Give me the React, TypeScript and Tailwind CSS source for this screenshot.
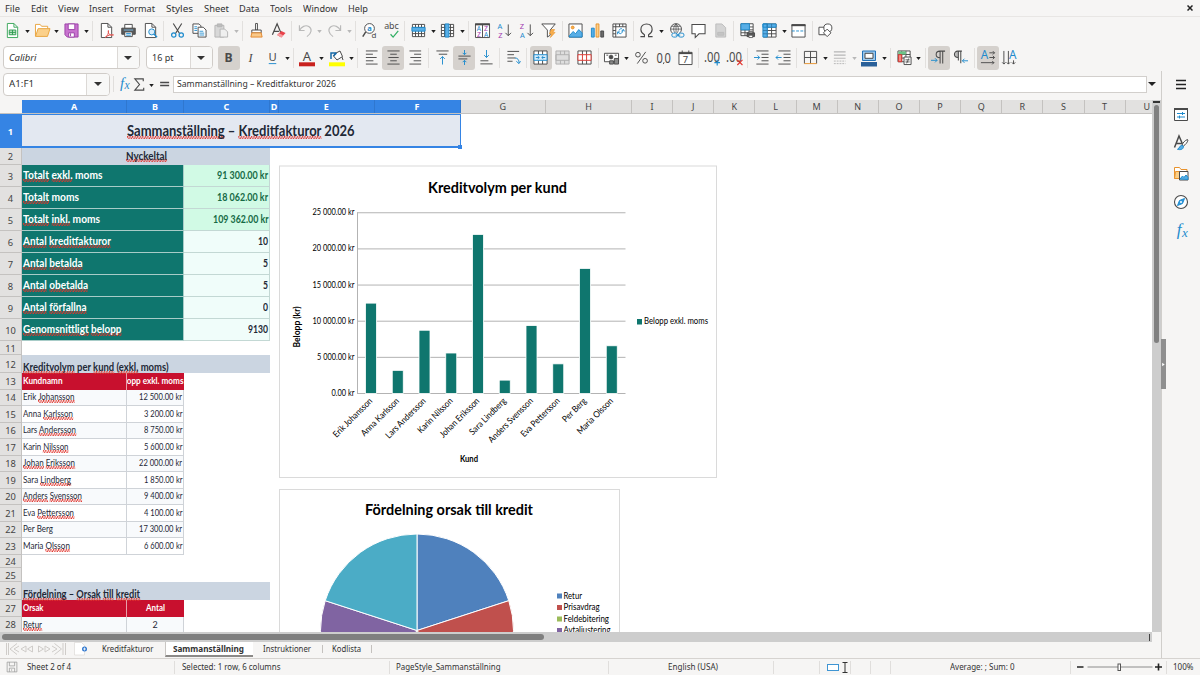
import { useLayoutEffect, useRef, type ReactNode } from "react";

const INK = "#4a4a4a";
const BLUE = "#1e8bcd";

/* ---------- text helpers ---------- */

function marked(text: string): ReactNode[] {
  return text.split("~").map((part, i) =>
    i % 2 ? (
      <span
        key={i}
        className="bg-[radial-gradient(circle_at_25%_30%,#e0342c_0.500px,transparent_1.100px),radial-gradient(circle_at_75%_75%,#e0342c_0.500px,transparent_1.100px)] bg-[length:3px_3px] bg-left-bottom bg-repeat-x pb-[0.800px]"
      >
        {part}
      </span>
    ) : (
      part
    ),
  );
}

/* One line of text, condensed or widened to take w pixels. */
function T({ w, t, className = "" }: { w: number; t: string; className?: string }) {
  const outer = useRef<HTMLSpanElement>(null);
  const inner = useRef<HTMLSpanElement>(null);
  useLayoutEffect(() => {
    const o = outer.current;
    const el = inner.current;
    if (!o || !el) return;
    el.style.transform = "none";
    const natural = el.getBoundingClientRect().width;
    o.style.width = `${w}px`;
    el.style.transform = `scaleX(${w / natural})`;
  }, [w, t]);
  return (
    <span ref={outer} className={`inline-block shrink-0 whitespace-nowrap ${className}`}>
      <span ref={inner} className="inline-block origin-left whitespace-nowrap">
        {marked(t)}
      </span>
    </span>
  );
}

/* ---------- icons ---------- */

function Svg({ children, className = "size-4" }: { children: ReactNode; className?: string }) {
  return (
    <svg viewBox="0 0 16 16" fill="none" stroke={INK} strokeWidth="1" className={`shrink-0 overflow-visible ${className}`}>
      {children}
    </svg>
  );
}

function Glyph({ x, y, s, c = INK, b, f = "Noto Sans", i, w, children }: { x: number; y: number; s: number; c?: string; b?: boolean; f?: string; i?: boolean; w?: number; children: string }) {
  return (
    <text x={x} y={y} fontSize={s} fill={c} stroke="none" textAnchor="middle" textLength={w} lengthAdjust="spacingAndGlyphs" fontFamily={`"${f}", sans-serif`} fontWeight={b ? 700 : 400} fontStyle={i ? "italic" : "normal"}>
      {children}
    </text>
  );
}

const gridLines = "M1.5 1.5h13v13h-13zM1.5 4.700h13M1.5 8h13M1.5 11.300h13M4.8 1.5v13M8 1.5v13M11.2 1.5v13";

const icons: Record<string, ReactNode> = {
  new: (
    <>
      <path d="M2.5 .5h7l4 4v11h-11z" fill="#fff" stroke="#3aa65a" />
      <path d="M9.5 .5v4h4" stroke="#3aa65a" />
      <path d="M4.5 7.5h7v5h-7zM4.5 10h7M8 7.5v5" fill="#bfe6c8" stroke="#2e9a50" />
    </>
  ),
  open: (
    <>
      <path d="M.5 14v-12.500h5l1.500 2h6.500v2.500" fill="#fff" stroke="#e8a33d" />
      <path d="M.5 14.300l2.800-8.300h12.700l-2.700 8.300z" fill="#fbd08a" stroke="#e8a33d" />
    </>
  ),
  save: (
    <>
      <path d="M1 1h14v14H3.500L1 12.500z" fill="#c873cf" stroke="#9b3fa6" />
      <path d="M4.5 1h7v6h-7z" fill="#fff" stroke="#9b3fa6" />
      <path d="M5 10.5h6V15H5z" fill="#fff" stroke="#9b3fa6" />
      <path d="M7 11v3" stroke="#9b3fa6" />
    </>
  ),
  pdf: (
    <>
      <path d="M2.5 .5h7l4 4v11h-11z" fill="#fff" />
      <path d="M9.5 .5v4h4" />
      <path d="M6.500 15.500c3-2 4-5 3.500-7.500-.9 4.500 3 5.500 5.500 4.700-3-.5-6 .3-9 2.800z" stroke="#e2504c" fill="#fff" />
    </>
  ),
  print: (
    <>
      <path d="M4 5.500v-4h8v4" fill="#fff" />
      <path d="M.8 5.500h14.400v6.500H.8z" fill="#5a5a5a" />
      <path d="M4 9.500h8v5H4z" fill="#fff" />
      <path d="M5.500 11.300h5M5.500 13h5" stroke={BLUE} />
      <path d="M3 7.500h10" stroke="#7cb8e0" />
    </>
  ),
  preview: (
    <>
      <path d="M2.500 .5h7l4 4v11h-11z" fill="#fff" />
      <path d="M9.500 .5v4h4" />
      <circle cx="9.300" cy="9.500" r="3.200" fill="#dceefb" stroke={BLUE} />
      <path d="M11.600 11.800l3.400 3.400" stroke={BLUE} strokeWidth="1.500" />
    </>
  ),
  cut: (
    <>
      <path d="M3.500 .5l6.500 10.500M12.500 .5L6 11" strokeWidth="1.200" />
      <circle cx="4" cy="12.800" r="2.300" stroke={BLUE} strokeWidth="1.300" />
      <circle cx="12" cy="12.800" r="2.300" stroke={BLUE} strokeWidth="1.300" />
    </>
  ),
  copy: (
    <>
      <path d="M1 1h6.500l2 2v8H1z" fill="#fff" />
      <path d="M6.500 4.500h5.500l3 3v7.500H6.500z" fill="#fff" />
      <path d="M8 8.800h4M8 10.800h5M8 12.800h5M2.500 4h3M2.500 6h3M2.500 8h3" stroke={BLUE} strokeWidth=".9" />
    </>
  ),
  paste: (
    <>
      <path d="M1 2.500h9.500v12.500H1z" fill="#d8d8d8" stroke="#b3b3b3" />
      <path d="M3.500 1h5v3h-5z" fill="#bdbdbd" stroke="#b3b3b3" />
      <path d="M6.500 6.500h5l3 3V15h-8z" fill="#efefef" stroke="#b3b3b3" />
    </>
  ),
  brush: (
    <>
      <path d="M7 .5h2v7H7z" fill="#fff" />
      <path d="M3 7.500h10v3H3z" fill="#fff" />
      <path d="M3 10.500h10l1 4.500H2z" fill="#f9c98a" stroke="#e2862c" />
    </>
  ),
  clear: (
    <>
      <path d="M1.500 12.500L6.500 .8l4 9.700M3.500 9h5" strokeWidth="1.300" />
      <path d="M6.500 12.700l4.500-4.200 4.500 2.200-4.500 4.800z" fill="#e8424a" stroke="none" />
      <path d="M6.500 12.700l2-1.900 4.500 2.300-2 2.400z" fill="#f59a9e" stroke="none" />
    </>
  ),
  undo: <path d="M1.500 2.500v5.500H7M1.700 7.800C3.500 4 8 1.700 11.500 3.800c3.800 2.200 3.300 7-2 10.700" stroke="#b9b9b9" strokeWidth="1.200" />,
  redo: <path d="M14.500 2.500v5.500H9M14.300 7.800C12.500 4 8 1.700 4.500 3.800c-3.800 2.200-3.300 7 2 10.700" stroke="#b9b9b9" strokeWidth="1.200" />,
  find: (
    <>
      <circle cx="8" cy="5.800" r="5.200" fill="#fff" />
      <path d="M4 9.500L.8 14.500" strokeWidth="1.600" />
      <Glyph x={8} y={8.200} s={8} c={BLUE} b>a</Glyph>
      <Glyph x={12.800} y={15.500} s={8.500}>d</Glyph>
    </>
  ),
  spell: (
    <>
      <Glyph x={8} y={6.800} s={9.500}>abc</Glyph>
      <path d="M7 12l2.700 3 5.500-6.500" stroke="#2fae62" strokeWidth="1.300" />
    </>
  ),
  row: (
    <>
      <path d={gridLines} fill="#fff" />
      <path d="M1 4.700h14v4H1z" fill="#58aee6" stroke={BLUE} />
    </>
  ),
  col: (
    <>
      <path d={gridLines} fill="#fff" />
      <path d="M5.500 1h4v14h-4z" fill="#58aee6" stroke={BLUE} />
    </>
  ),
  sort: (
    <>
      <path d="M.5 1h15v14.500H.5zM8 1v14.500" fill="#fff" />
      <path d="M0 1.500h16" strokeWidth="2" />
      <Glyph x={4.200} y={8.800} s={7} w={4.500} c={BLUE}>A</Glyph>
      <Glyph x={4.200} y={14.800} s={7} w={4.200} c="#a23bb0">Z</Glyph>
      <Glyph x={11.800} y={8.800} s={7} w={4.200} c="#a23bb0">Z</Glyph>
      <Glyph x={11.800} y={14.800} s={7} w={4.500} c={BLUE}>A</Glyph>
    </>
  ),
  asc: (
    <>
      <Glyph x={3} y={6.500} s={8} c={BLUE}>A</Glyph>
      <Glyph x={3.500} y={15.500} s={8} c="#a23bb0">Z</Glyph>
      <path d="M12 1.500v12M9 10.500L12 13.500l3-3" />
    </>
  ),
  desc: (
    <>
      <Glyph x={3} y={6.500} s={8} c="#a23bb0">Z</Glyph>
      <Glyph x={3.500} y={15.500} s={8} c={BLUE}>A</Glyph>
      <path d="M12 1.500v12M9 10.500L12 13.500l3-3" />
    </>
  ),
  filter: (
    <>
      <path d="M.8 1h14.400L9.800 7.500v5.500l-3 2V7.500z" fill="#fff" />
      <path d="M11 7l-2 4.500h2.500L10 15.500l5-5.500h-2.500L14.500 7z" fill="#f9b04d" stroke="#e8922c" strokeWidth=".7" />
    </>
  ),
  image: (
    <>
      <path d="M1 1h14v14H1z" fill="#fff" />
      <path d="M1.500 13.500l4-4.500 2.500 2.500L11.500 7l3.500 3.500V15H1.500z" fill="#58aee6" stroke={BLUE} />
      <circle cx="5" cy="4.800" r="1.500" fill="#f9b04d" stroke="#e8922c" />
    </>
  ),
  chart: (
    <>
      <path d="M1.500 5.500h3V15h-3z" fill="#58aee6" stroke={BLUE} />
      <path d="M6.500 1h3v14h-3z" fill="#fbd08a" stroke="#e8922c" />
      <path d="M11.500 8.500h3V15h-3z" fill="#6a6a6a" />
    </>
  ),
  pivot: (
    <>
      <path d="M1 1h14v14H1zM1 4h14M4 1v14M8 1v3M11.500 1v3M1 8h3M1 11.500h3" fill="#fff" />
      <path d="M6.500 9.500C8 12.500 11 12 12 7M6 12V9.500h2.300M10 9l2-2.200 1.500 2.200M7.500 8c.5-1.500 1.500-2 3-2" stroke={BLUE} />
    </>
  ),
  omega: <path d="M1.500 14.500h4.300v-2C3.700 11.300 2 9.500 2 7c0-3.800 2.500-6 6-6s6 2.200 6 6c0 2.500-1.700 4.300-3.800 5.500v2h4.300" strokeWidth="1.200" />,
  link: (
    <>
      <circle cx="7.500" cy="6.500" r="5.800" fill="#fff" />
      <path d="M2 6.500h11M3 3.500h9M7.500 1v11M7.500 1c-3.300 3-3.300 8 0 11M7.500 1c3.300 3 3.300 8 0 11" strokeWidth=".8" />
      <path d="M3 10.500h13v4.500H3z" fill="#f6f5f4" stroke="none" />
      <rect x="3" y="10.800" width="6" height="4.200" rx="2" stroke={BLUE} />
      <rect x="10" y="10.800" width="6" height="4.200" rx="2" stroke={BLUE} />
      <path d="M7 12.900h5" stroke={BLUE} />
    </>
  ),
  comment: <path d="M1 1.500h14v10H8.500l-4 4v-4H1z" fill="#fff" strokeWidth="1.100" />,
  header: (
    <>
      <path d="M3 1h6.500L13.500 5v10H3z" fill="#d4d4d4" stroke="#bcbcbc" />
      <path d="M5 10h6.500v3H5z" fill="#c4c4c4" stroke="#bcbcbc" />
    </>
  ),
  printArea: (
    <>
      <path d="M1 .8h13v12.700H1zM1 4.200h13M1 7.300h13M1 10.400h13M5.300 .8v12.700M9.700 .8v12.700" fill="#fff" />
      <path d="M1 .8h9v6.500H1z" fill="#58aee6" stroke={BLUE} />
      <path d="M7.500 10.500h8v4h-8z" fill="#5a5a5a" />
      <path d="M9.500 9h4v1.500h-4zM9.500 13h4v2.500h-4z" fill="#fff" strokeWidth=".8" />
    </>
  ),
  freeze: (
    <>
      <path d="M1.500 1h13.500v14H1.500zM1.500 4.500H15M1.500 8H15M1.500 11.500H15M5.500 1v14M10.200 1v14" fill="#fff" />
      <path d="M1 1h14v3.500H1zM1 1h4.500v14H1z" fill="#58aee6" stroke={BLUE} />
      <path d="M5.500 1v3.500M10.200 1v3.500M1 8h4.500M1 11.500h4.500" stroke="#2b6d9c" strokeWidth=".8" />
    </>
  ),
  split: (
    <>
      <path d="M1 2h14v13H1z" fill="#fff" />
      <path d="M.5 2.300h15" strokeWidth="2.200" />
      <path d="M1 8.500h14" stroke={BLUE} strokeDasharray="3 1.500" />
    </>
  ),
  shapes: (
    <>
      <path d="M1 4.500h7v8H1z" fill="#fff" />
      <circle cx="10.500" cy="5.300" r="4.300" fill="#fff" />
      <path d="M9.800 6.500l4 4-4 4-4-4z" fill="#fff" />
    </>
  ),
  bold: <Glyph x={8} y={12.500} s={13} b>B</Glyph>,
  italic: <Glyph x={8} y={12.500} s={13} f="Liberation Serif" i>I</Glyph>,
  underline: (
    <>
      <Glyph x={8} y={11.500} s={12}>U</Glyph>
      <path d="M4 14.500h8" stroke={BLUE} />
    </>
  ),
  fontColor: (
    <>
      <Glyph x={8} y={10.500} s={13}>A</Glyph>
      <path d="M0 12.300h16v4H0z" fill="#c9211e" stroke="none" />
    </>
  ),
  fill: (
    <>
      <path d="M6 3.500l5-2.500 2.500 5.500-5.500 3.500-3.500-4z" fill="#fff" />
      <path d="M2 9V3h5M4.500 6l3-3" stroke="#1669a8" strokeWidth="1.500" />
      <path d="M13 7l1 3" stroke={INK} />
      <path d="M0 12.300h16v4H0z" fill="#ffff00" stroke="none" />
    </>
  ),
  left: <path d="M2 1h12.500M2 4.500h7.500M2 8h11.500M2 11.500h8M2 15h12.500" />,
  center: <path d="M1.500 1h13M4.500 4.500h7M2.500 8h11M4.500 11.500h7M1.500 15h13" />,
  right: <path d="M1.500 1H14M6.500 4.500H14M2.500 8H14M6 11.500h8M1.500 15H14" />,
  top: (
    <>
      <path d="M1.500 1h13M4 4.500h9" />
      <path d="M8 15.500V7M5.500 9.500L8 7l2.500 2.500" stroke={BLUE} />
    </>
  ),
  middle: (
    <>
      <path d="M1.500 6.500h13M1.500 9.500h9.500" />
      <path d="M8 0v5M6 3l2 2 2-2M8 16v-5M6 13l2-2 2 2" stroke={BLUE} />
    </>
  ),
  bottom: (
    <>
      <path d="M1.500 11.500h8.500M1.500 14.800h13" />
      <path d="M8 0v8M5.500 5.500L8 8l2.500-2.500" stroke={BLUE} />
    </>
  ),
  wrap: (
    <>
      <path d="M1.500 1.500h12.500M1.500 5h7M1.500 8.500h8.500M1.500 12h5.500" />
      <path d="M9.500 8.500c3 0 4.500 2 4.500 5.500M11 12l2.800 2.500L15.500 12" stroke={BLUE} />
    </>
  ),
  merge: (
    <>
      <path d="M1 1h14v14H1zM5.800 1v4M10.200 1v4M5.800 11v4M10.200 11v4" fill="#fff" />
      <path d="M1 5h14v6H1z" fill="#d8edfb" stroke={BLUE} />
      <path d="M3 8h3.500M13 8H9.500M5 6.500L6.700 8 5 9.500M11 6.500L9.300 8l1.700 1.500" stroke={BLUE} />
    </>
  ),
  mergeOff: <path d="M1 1h14v14H1zM5.800 1v4M10.200 1v4M5.800 11v4M10.200 11v4M1 5h14v6H1z" fill="#dedede" stroke="#b0b0b0" />,
  unmerge: (
    <>
      <path d="M1 1h14v14H1zM5.800 1v4M10.200 1v4M5.800 11v4M10.200 11v4" fill="#fff" />
      <path d="M1 5h14v6H1zM5.800 5v6M10.200 5v6" fill="#fff" stroke="#d9342e" />
    </>
  ),
  currency: (
    <>
      <path d="M.5 3.500h15v9H.5z" fill="#fff" />
      <circle cx="7.500" cy="7.500" r="2" fill={INK} />
      <path d="M2.500 5.500h2M11.500 5.500h2" />
      <path d="M6 11.500h4V15H6zM11 9h4.500v6H11z" fill="#8a8a8a" />
    </>
  ),
  percent: (
    <>
      <circle cx="4.200" cy="5" r="2.500" />
      <circle cx="11.800" cy="11.500" r="2.500" />
      <path d="M12.500 2L3.500 14.500" />
    </>
  ),
  number: (
    <>
      <Glyph x={4} y={13.800} s={15.500} w={6.800}>0</Glyph>
      <Glyph x={12.500} y={13.800} s={15.500} w={6.800}>0</Glyph>
      <path d="M8.600 13l-.8 2" />
    </>
  ),
  date: (
    <>
      <path d="M1 2.500h14V15.500H1z" fill="#fff" />
      <path d="M1 3.500h14" strokeWidth="1.800" />
      <path d="M4.500 .5v3M11.500 .5v3" />
      <Glyph x={8} y={14} s={10}>7</Glyph>
    </>
  ),
  addDec: (
    <>
      <Glyph x={7.500} y={13.300} s={15} w={17}>.00</Glyph>
      <path d="M13 10.500v6M10 13.500h6" stroke={BLUE} strokeWidth="1.200" />
    </>
  ),
  delDec: (
    <>
      <Glyph x={7.500} y={13.300} s={15} w={17}>.00</Glyph>
      <path d="M11 10.500l5.500 5.500M16.500 10.500l-5.500 5.500" stroke="#e2342e" strokeWidth="1.200" />
    </>
  ),
  indent: (
    <>
      <path d="M2.500 1h13M8 4.500h7.500M8 8h7.500M8 11.500h7.500M2.500 15h13" />
      <path d="M0 8h6M3.800 5.800L6 8 3.800 10.200" stroke={BLUE} />
    </>
  ),
  outdent: (
    <>
      <path d="M2.500 1h13M8 4.500h7.500M8 8h7.500M8 11.500h7.500M2.500 15h13" />
      <path d="M0 8h6M2.200 5.800L0 8l2.200 2.200" stroke={BLUE} />
    </>
  ),
  borders: (
    <>
      <path d="M1.500 1.500h13v13M1.500 1.500v13M8 1.500v13M1.500 8h13" fill="none" />
      <path d="M1.500 14.500h13" stroke="#e8922c" />
    </>
  ),
  lineStyle: (
    <>
      <path d="M2 2h12.500M2 5.500h12.500" stroke="#b5b5b5" strokeWidth="1.500" />
      <path d="M2 8.800h12.500" stroke="#b5b5b5" />
      <path d="M2 11.800h12.500M2 14.500h12.500" stroke="#b5b5b5" strokeDasharray="2 1" />
    </>
  ),
  lineColor: (
    <>
      <path d="M1.500 1h13v9.500h-13z" fill="#9cc9ee" stroke="#2272b8" />
      <path d="M4 3.300h8v5H4z" fill="#fff" />
      <path d="M0 12h16v4.500H0z" fill="#2a6099" stroke="none" />
    </>
  ),
  conditional: (
    <>
      <path d="M1 1h13v11.500H1zM1 4.800h13M1 8.600h13M5 1v11.500M9.500 1v11.500" fill="#fff" />
      <path d="M1.500 1.500h8v3.300h-8z" fill="#6dc487" stroke="none" />
      <path d="M1.500 5H5v7.500H1.500z" fill="#f28b86" stroke="#d9342e" />
      <path d="M7.500 7.500h7.500v8H7.500z" fill="#fff" />
      <path d="M9 10.500h4.500M9 12.700h4.500M12.500 9l-2.200 5.200" strokeWidth=".9" />
    </>
  ),
  ltr: (
    <>
      <path d="M15 1.200H9.500C7 1.200 5.500 2.700 5.500 4.800s1.500 3.500 4 3.500M9.700 1.200v13.300M12.500 1.200v13.300" strokeWidth="1.100" />
      <path d="M0 11h6.500M4.300 8.800L6.500 11l-2.200 2.200" stroke={BLUE} />
    </>
  ),
  rtl: (
    <>
      <path d="M5.500 1.500H5c-4.500 0-4.500 6.500 0 6.500h.5z" fill="#bbb" stroke="none" />
      <path d="M9.500 1.200H5c-2 0-3.500 1.400-3.500 3.400S3 8 5.500 8M5.700 1.200v10M8.300 1.200v13" strokeWidth="1.100" />
      <path d="M16 11.500h-6M12.200 9.300L10 11.500l2.200 2.200" stroke={BLUE} />
    </>
  ),
  horiz: (
    <>
      <Glyph x={4.800} y={10} s={12.500} c={BLUE}>A</Glyph>
      <path d="M10 3h5.500M13.700 1.200L15.500 3l-1.800 1.800M10 8h5.500M13.700 6.200L15.500 8l-1.800 1.800M1 13.500h14M13 11.700l1.800 1.800-1.800 1.800" />
    </>
  ),
  vert: (
    <>
      <Glyph x={11.500} y={10} s={12.500} c={BLUE}>A</Glyph>
      <path d="M2 1v14M.2 13.200L2 15l1.800-1.800M6.800 1v14M5 13.200L6.800 15l1.800-1.800M12.300 11v4M10.500 13.200l1.800 1.800 1.800-1.800" />
    </>
  ),
};

function Ic({ n, on }: { n: string; on?: boolean }) {
  return (
    <span className={`flex h-6 w-[22px] shrink-0 items-center justify-center ${on ? "rounded-[3px] bg-[#d5d1cd]" : ""}`}>
      <Svg className={n === "fontColor" || n === "fill" || n === "lineColor" ? "size-4" : "size-[15px]"}>{icons[n]}</Svg>
    </span>
  );
}

function Caret({ dim, className = "w-[7.500px]" }: { dim?: boolean; className?: string }) {
  return (
    <span className={`flex shrink-0 items-center justify-center ${className}`}>
      <svg viewBox="0 0 6 4" className="mt-0.5 h-[3px] w-[5px]">
        <path d="M0 0h6L3 4z" fill={dim ? "#b8b8b8" : "#1f1f1f"} />
      </svg>
    </span>
  );
}

/* Items: a name is an icon, "|" a divider, "v" a menu arrow, "d" a disabled one, "*" marks a pressed button. */
function Tools({ items }: { items: string }) {
  return (
    <>
      {items.split(" ").map((it, i) =>
        it === "|" ? (
          <span key={i} className="flex w-[5.120px] shrink-0 justify-center">
            <span className="h-5 w-px bg-[#e2e0de]" />
          </span>
        ) : it === "v" || it === "d" ? (
          <Caret key={i} dim={it === "d"} />
        ) : (
          <Ic key={i} n={it.replace("*", "")} on={it.endsWith("*")} />
        ),
      )}
    </>
  );
}

function Combo({ children, className, arrow }: { children: ReactNode; className: string; arrow: string }) {
  return (
    <div className={`flex h-[23px] shrink-0 items-stretch overflow-hidden rounded-[4px] border border-[#d0ccc8] bg-white ${className}`}>
      <div className="flex flex-1 items-center">{children}</div>
      <div className={`flex items-center justify-center border-l border-[#dcd9d6] bg-[#f8f8f7] ${arrow}`}>
        <svg viewBox="0 0 8 4" className="h-1 w-2">
          <path d="M0 0h8L4 4z" fill="#333" />
        </svg>
      </div>
    </div>
  );
}

/* ---------- sheet ---------- */

const columns: [string, string][] = [
  ["A", "w-[105px]"], ["B", "w-[57px]"], ["C", "w-[86px]"], ["D", "w-[9px]"], ["E", "w-[95.500px]"], ["F", "w-[86px]"],
  ["G", "w-[85.500px]"], ["H", "w-[86px]"],
  ..."IJKLMNOPQRST".split("").map((c): [string, string] => [c, "w-[41.150px]"]),
];

function Row({ n, h, children }: { n: number; h: string; children?: ReactNode }) {
  const on = n === 1;
  return (
    <div className={`flex shrink-0 ${h}`}>
      <div
        className={`flex w-[22px] shrink-0 items-center justify-center border-r border-b pt-0.5 text-[9.300px] ${
          on ? "border-[#3584e4] bg-[#3584e4] font-bold text-white" : "border-[#c4c2c0] bg-[#e2e1e0] text-[#444]"
        }`}
      >
        {n}
      </div>
      <div className="flex min-w-0 flex-1 font-[Lato,sans-serif] text-[#1f2937]">{children}</div>
    </div>
  );
}

const metrics: [number, string, number, string, number][] = [
  [3, "~Totalt~ ~exkl.~ moms", 79.500, "91 300.00 kr", 51],
  [4, "~Totalt~ moms", 56, "18 062.00 kr", 51],
  [5, "~Totalt~ ~inkl.~ moms", 77, "109 362.00 kr", 55.500],
  [6, "~Antal~ ~kreditfakturor~", 88, "10", 10],
  [7, "~Antal~ ~betalda~", 59.500, "5", 5],
  [8, "~Antal~ ~obetalda~", 65, "5", 5],
  [9, "~Antal~ ~förfallna~", 63.500, "0", 5],
  [10, "~Genomsnittligt~ ~belopp~", 98.500, "9130", 20],
];

const customers: [string, number, string, number, number][] = [
  ["Erik ~Johansson~", 51.500, "12 500.00 kr", 43, 12500],
  ["Anna ~Karlsson~", 50, "3 200.00 kr", 38.500, 3200],
  ["Lars ~Andersson~", 53, "8 750.00 kr", 38.500, 8750],
  ["Karin ~Nilsson~", 45.500, "5 600.00 kr", 38.500, 5600],
  ["~Johan~ ~Eriksson~", 52, "22 000.00 kr", 43, 22000],
  ["Sara ~Lindberg~", 48, "1 850.00 kr", 38.500, 1850],
  ["~Anders~ ~Svensson~", 59, "9 400.00 kr", 38.500, 9400],
  ["Eva ~Pettersson~", 51, "4 100.00 kr", 38.500, 4100],
  ["Per Berg", 30, "17 300.00 kr", 43, 17300],
  ["Maria ~Olsson~", 47, "6 600.00 kr", 38.500, 6600],
];

function SectionTitle({ t, w }: { t: string; w: number }) {
  return (
    <div className="flex w-[248px] items-end bg-[#cbd5e1] pl-[0.500px] text-[11px] leading-[13px] font-bold">
      <T w={w} t={t} />
    </div>
  );
}

function TableHead({ a, aw, b, bw, right }: { a: string; aw: number; b: string; bw: number; right?: boolean }) {
  return (
    <>
      <div className="flex w-[105px] items-center border-r border-[#e8a0aa] bg-[#c8102e] pb-px pl-[0.500px] text-[9.400px] leading-3 font-bold text-white">
        <T w={aw} t={a} />
      </div>
      <div className={`flex w-[57px] items-center overflow-hidden bg-[#c8102e] pb-px text-[9.400px] leading-3 font-bold text-white ${right ? "justify-end pr-[0.500px]" : "justify-center"}`}>
        <T w={bw} t={b} />
      </div>
    </>
  );
}

/* ---------- charts ---------- */

function ChartText({ x, y, w, s, t, anchor = "start", b, rot }: { x: number; y: number; w: number; s: number; t: string; anchor?: "start" | "middle" | "end"; b?: boolean; rot?: number }) {
  return (
    <text x={x} y={y} fontSize={s} textLength={w} lengthAdjust="spacingAndGlyphs" textAnchor={anchor} fontWeight={b ? 700 : 400} fill="#000" transform={rot ? `rotate(${rot} ${x} ${y})` : undefined}>
      {t}
    </text>
  );
}

function BarChart() {
  const base = 393.5;
  const ticks = [0, 5, 10, 15, 20, 25];
  return (
    <svg viewBox="279 165 439 313" className="absolute top-[65px] left-[279px] h-[313px] w-[439px] font-[Lato,sans-serif]">
      <rect x="279.500" y="166" width="437" height="311.500" fill="#fff" stroke="#dadada" />
      <ChartText x={497.500} y={193} w={139} s={15.500} t="Kreditvolym per kund" anchor="middle" b />
      {ticks.map((k) => (
        <g key={k}>
          <line x1="357" x2="625.500" y1={base - k * 7.230} y2={base - k * 7.230} stroke="#b3b3b3" />
          <ChartText x={354.500} y={base - k * 7.230 + 2.500} w={k === 0 ? 23 : k === 5 ? 37.500 : 42} s={8.900} anchor="end" t={k === 0 ? "0.00 kr" : `${k} 000.00 kr`} />
        </g>
      ))}
      <line x1="357.500" x2="357.500" y1="212.500" y2="394" stroke="#b3b3b3" />
      {customers.map(([name, w, , , v], i) => {
        const x = 371 + i * 26.75;
        const h = v * 0.00723;
        return (
          <g key={name}>
            <rect x={x - 5.500} y={base - h} width="11" height={h} fill="#0f766e" stroke="#fff" strokeWidth=".8" />
            <ChartText x={x + 2} y={401.500} w={w} s={8.900} anchor="end" t={name.replace(/~/g, "")} rot={-45} />
          </g>
        );
      })}
      <ChartText x={299.500} y={327} w={41} s={8.800} anchor="middle" t="Belopp (kr)" b rot={-90} />
      <ChartText x={469} y={461.500} w={18} s={8.900} anchor="middle" t="Kund" b />
      <rect x="637" y="319" width="5" height="5.500" fill="#0f766e" />
      <ChartText x={644} y={324} w={64} s={9} t="Belopp exkl. moms" />
    </svg>
  );
}

function PieChart() {
  const cx = 417;
  const cy = 630.5;
  const r = 96.5;
  const colors = ["#4f81bd", "#c0504d", "#9bbb59", "#8064a2", "#4bacc6"];
  const at = (deg: number) => `${cx + r * Math.sin((deg * Math.PI) / 180)} ${cy - r * Math.cos((deg * Math.PI) / 180)}`;
  const legend: [string, number][] = [["Retur", 18.500], ["Prisavdrag", 36], ["Feldebitering", 45.500], ["Avtaljustering", 47]];
  return (
    <svg viewBox="279 489 341 143" className="absolute top-[389px] left-[279px] h-[143px] w-[341px] font-[Lato,sans-serif]">
      <rect x="279.500" y="489.500" width="340" height="200" fill="#fff" stroke="#dadada" />
      <ChartText x={449} y={515} w={168} s={15.500} t="Fördelning orsak till kredit" anchor="middle" b />
      {colors.map((c, i) => (
        <path key={c} d={`M${cx} ${cy}L${at(i * 72)}A${r} ${r} 0 0 1 ${at(i * 72 + 72)}z`} fill={c} stroke="#fff" />
      ))}
      {legend.map(([t, w], i) => (
        <g key={t}>
          <rect x="557" y={593.500 + i * 11.500} width="5" height="5" fill={colors[i]} />
          <ChartText x={563.500} y={598.800 + i * 11.500} w={w} s={9} t={t} />
        </g>
      ))}
    </svg>
  );
}

/* ---------- page ---------- */

const menus: [string, number][] = [
  ["File", 15], ["Edit", 16.500], ["View", 21], ["Insert", 24.500], ["Format", 31], ["Styles", 27], ["Sheet", 25],
  ["Data", 20.500], ["Tools", 22], ["Window", 34.500], ["Help", 20],
];

function Status({ children, className }: { children?: ReactNode; className: string }) {
  return <div className={`flex h-[13px] shrink-0 items-center ${className}`}>{children}</div>;
}

export default function App() {
  return (
    <div className="flex h-[675px] w-[1200px] flex-col overflow-hidden bg-[#f6f5f4] font-['Noto_Sans',sans-serif] text-[#333]">
      <div className="flex h-[17px] shrink-0 items-center border-b border-[#e8e6e4] pr-[7px] pl-[5px] text-[9px] leading-none">
        <div className="flex gap-[10.600px]">
          {menus.map(([t, w]) => (
            <T key={t} t={t} w={w} />
          ))}
        </div>
        <svg viewBox="0 0 6 6" className="ml-auto size-[6px]">
          <path d="M.5 .5l5 5M5.500 .5l-5 5" stroke="#222" strokeWidth="1.500" />
        </svg>
      </div>

      <div className="flex h-[27px] shrink-0 items-center pl-[1.700px]">
        <Tools items="new v open v save v | pdf print preview | cut copy paste d | brush clear | undo d redo d | find spell | row v col v | sort asc desc filter | image chart pivot | omega v link comment header | printArea freeze v split | shapes" />
      </div>

      <div className="flex h-[27px] shrink-0 items-center pl-[3px]">
        <Combo className="w-[136.500px]" arrow="w-[22px]">
          <T w={27.500} t="Calibri" className="ml-[5px] text-[9.300px] italic" />
        </Combo>
        <Combo className="mr-[5px] ml-[6px] w-[67px]" arrow="w-[22px]">
          <T w={21.500} t="16 pt" className="ml-[5px] text-[9.300px]" />
        </Combo>
        <Tools items="bold* italic underline v | fontColor v fill v | left center* right | top middle* bottom | wrap | merge* mergeOff unmerge | currency v percent number date | addDec delDec | indent outdent | borders v lineStyle d lineColor v | conditional v | ltr* rtl | horiz* vert" />
      </div>

      <div className="flex h-[587px] shrink-0">
        <div className="flex w-[1161px] shrink-0 flex-col">
          <div className="flex h-[29px] shrink-0 items-center pb-[3px] pl-[3px]">
            <Combo className="w-[107px]" arrow="w-[23px]">
              <T w={25} t="A1:F1" className="ml-[5px] text-[9.300px]" />
            </Combo>
            <span className="ml-[3px] h-4 w-px bg-[#e0dedc]" />
            <Svg className="ml-[2px] size-4">
              <Glyph x={6} y={12} s={15} c={BLUE} f="Liberation Serif" i>f</Glyph>
              <Glyph x={11} y={13} s={11.500} c={BLUE} f="Liberation Serif" i>x</Glyph>
            </Svg>
            <Svg className="size-[15px]">
              <path d="M12 4.500V2H3l5 6-5 6h9.500v-2.500" strokeWidth="1.200" />
            </Svg>
            <Caret className="w-[9px]" />
            <Svg className="ml-[3px] size-3">
              <path d="M1.500 6h12M1.500 10h12" strokeWidth="1.800" />
            </Svg>
            <div className="ml-[1.500px] flex h-[17px] w-[974px] items-center border border-[#d2cfcc] bg-white pl-[3.500px] text-[9.300px]">
              <T w={159} t="Sammanställning – Kreditfakturor 2026" />
            </div>
            <svg viewBox="0 0 8 4" className="ml-px h-1 w-2">
              <path d="M0 0h8L4 4z" fill="#222" />
            </svg>
          </div>

          <div className="flex h-[532px] shrink-0">
            <div className="relative flex w-[1152px] shrink-0 flex-col overflow-hidden bg-white">
              <div className="flex h-[14px] shrink-0 border-b border-[#c4c2c0] bg-[#e2e1e0] text-[9px] leading-none text-[#444]">
                <div className="w-[22px] shrink-0 bg-[#f6f5f4]" />
                {columns.map(([c, w], i) => (
                  <div key={c} className={`flex shrink-0 items-center justify-center border-r ${w} ${i < 6 ? "border-[#2f77cf] bg-[#3584e4] font-bold text-white" : "border-[#c4c2c0]"}`}>
                    {c}
                  </div>
                ))}
                <div className="flex flex-1 items-center justify-end pr-0.5">U</div>
              </div>

              <Row n={1} h="h-[34px]">
                <div className="relative flex w-[438.500px] items-center justify-center border-t border-r border-b-2 border-[#3584e4] bg-[#e3e8f1] pb-0.5 text-[15.300px] leading-5 font-bold">
                  <T w={227.500} t="~Sammanställning~ – ~Kreditfakturor~ 2026" />
                  <span className="absolute -right-0.5 -bottom-[3px] size-1 bg-[#3584e4]" />
                </div>
              </Row>
              <Row n={2} h="h-[17px]">
                <div className="flex w-[248px] items-center justify-center bg-[#cbd5e1] pb-0.5 text-[11px] leading-[14px] font-bold">
                  <T w={41} t="~Nyckeltal~" />
                </div>
              </Row>
              {metrics.map(([n, label, w, value, vw], i) => (
                <Row key={n} n={n} h="h-[22px]">
                  <div className="flex w-[162px] items-center border-r border-b border-[#a8ccc8] bg-[#0f766e] pb-px pl-[0.500px] text-[11px] leading-[14px] font-bold text-white">
                    <T w={w} t={label} />
                  </div>
                  <div className={`flex w-[86px] items-center justify-end border-r border-b border-[#c3d8d4] pr-px pb-0.5 text-[11px] leading-[14px] font-bold ${i < 3 ? "bg-[#d1fae5] text-[#166a45]" : "bg-[#f0fdfa]"}`}>
                    <T w={vw} t={value} />
                  </div>
                </Row>
              ))}
              <Row n={11} h="h-[14px]" />
              <Row n={12} h="h-[18px]">
                <SectionTitle w={145.500} t="~Kreditvolym~ per ~kund~ (~exkl,~ moms)" />
              </Row>
              <Row n={13} h="h-[16.500px]">
                <TableHead a="Kundnamn" aw={39.500} b="Belopp exkl. moms" bw={68.500} right />
              </Row>
              {customers.map(([name, w, value, vw], i) => (
                <Row key={name} n={14 + i} h="h-[16.500px]">
                  <div className={`flex w-[105px] items-center border-r border-b border-[#cfd3d8] pl-[0.500px] text-[9.500px] leading-3 ${i % 2 ? "bg-white" : "bg-[#f8fafc]"}`}>
                    <T w={w} t={name} />
                  </div>
                  <div className={`flex w-[57px] items-center justify-end border-r border-b border-[#cfd3d8] pr-px text-[9px] leading-3 ${i % 2 ? "bg-white" : "bg-[#f8fafc]"}`}>
                    <T w={vw} t={value} />
                  </div>
                </Row>
              ))}
              <Row n={24} h="h-[13.500px]" />
              <Row n={25} h="h-[14px]" />
              <Row n={26} h="h-[18px]">
                <SectionTitle w={117} t="~Fördelning~ – ~Orsak~ ~till~ ~kredit~" />
              </Row>
              <Row n={27} h="h-[16.500px]">
                <TableHead a="Orsak" aw={20.500} b="Antal" bw={19} />
              </Row>
              <Row n={28} h="h-[16.500px]">
                <div className="flex w-[105px] items-center border-r border-[#cfd3d8] bg-[#f8fafc] pl-[0.500px] text-[9.500px] leading-3">
                  <T w={19} t="~Retur~" />
                </div>
                <div className="flex w-[57px] items-center justify-center border-r border-[#cfd3d8] bg-[#f8fafc] text-[9px] leading-3">2</div>
              </Row>

              <BarChart />
              <PieChart />
            </div>
            <div className="flex w-[9px] shrink-0 flex-col items-center bg-[#cdcdcd] pt-px">
              <span className="h-[1.500px] w-[7px] bg-[#333]" />
              <span className="mt-[2.500px] h-[238px] w-[5.500px] rounded-full bg-[#808080]" />
            </div>
          </div>

          <div className="flex h-[10px] w-[1152px] shrink-0 items-center justify-between bg-[#cdcdcd] px-0.5">
            <span className="h-[5.500px] w-[542px] rounded-full bg-[#7f7f7f]" />
            <span className="h-[7px] w-[1.500px] bg-[#444]" />
          </div>

          <div className="flex h-[16px] shrink-0 items-start text-[9.300px] leading-[14px]">
            <svg viewBox="0 0 62 14" fill="none" stroke="#cfccc9" className="ml-[5px] h-[14px] w-[62px]">
              <path d="M1.500 1v12M3.500 1v12M12 1.500L5 7l7 5.500M14 4L9 7l5 3M21 4l-5 3 5 3zM27.500 4l-5 3 5 3zM33.500 4l5 3-5 3zM40 4l5 3-5 3zM47 4l5 3-5 3M49.500 1.500l7 5.500-7 5.500M58 1v12M60.500 1v12" />
            </svg>
            <svg viewBox="0 0 14 14" className="ml-[7px] size-[14px]">
              <path d="M.5 .5h7l3 3v9.500H.5z" fill="#fff" stroke="#d8d5d2" strokeWidth=".6" />
              <circle cx="10.500" cy="7" r="2.500" fill="#2f77cf" />
              <path d="M10.500 5.500v3M9 7h3" stroke="#fff" strokeWidth=".8" />
            </svg>
            <T w={51.500} t="Kreditfakturor" className="ml-[14px]" />
            <div className="ml-[11.500px] flex h-[15px] w-[88px] justify-center border-b-2 border-l border-b-[#8b8987] border-l-[#c9c6c3] bg-white pr-[2.500px] font-bold">
              <T w={71} t="Sammanställning" />
            </div>
            <T w={48} t="Instruktioner" className="ml-[9.500px]" />
            <span className="mt-[3px] ml-[11px] h-2 w-px bg-[#c4c1be]" />
            <T w={29} t="Kodlista" className="ml-[9px]" />
            <span className="mt-[3px] ml-[10px] h-2 w-px bg-[#c4c1be]" />
          </div>
        </div>

        <div className="relative flex flex-1 flex-col items-center gap-[13.200px] border-l border-[#d0cecb] pt-[6px]">
          <Svg>
            <path d="M3 3.500h10M3 7.500h10M3 11.500h10" stroke="#222" strokeWidth="1.500" />
          </Svg>
          <Svg>
            <path d="M1.500 2.500h13v12h-13z" fill="#fff" />
            <path d="M1 3h14" strokeWidth="2" />
            <path d="M4 7.500h8M4 11h8M9.500 6v3M6.500 9.500v3" stroke={BLUE} />
          </Svg>
          <Svg>
            <path d="M1.500 12.500L6 1l3.500 8M3 8.500h5.500" strokeWidth="1.500" />
            <path d="M14.500 4.500c-2.500 1-4.500 3-5.500 5.500l1.500 1c2-1.500 4-3.500 4.500-6z" fill="#fff" />
            <path d="M8.800 10.300c-2 .2-2 2.700-4.300 4 3 .8 6 .2 6-3z" fill="#58aee6" stroke={BLUE} />
          </Svg>
          <Svg>
            <path d="M1.500 13.500v-11h5l1.500 2h6v3" fill="#fff" stroke="#e8922c" />
            <path d="M1.500 13.500l1-7h5v7z" fill="#fbd08a" stroke="#e8922c" />
            <path d="M6.500 6.500h8.500v8.500H6.500z" fill="#fff" />
            <path d="M7 14l2.500-3 1.500 1.500 2-2.500 2 2.500v2z" fill="#58aee6" stroke={BLUE} />
          </Svg>
          <Svg>
            <circle cx="8" cy="8" r="6.500" fill="#fff" strokeWidth="1.100" />
            <path d="M11.500 4.500L9.500 9.500l-5 2 2-5z" fill="#2f97dd" stroke={BLUE} />
            <circle cx="8" cy="8" r="1" fill="#fff" stroke="none" />
          </Svg>
          <Svg>
            <Glyph x={6} y={12} s={17} c={BLUE} f="Liberation Serif" i>f</Glyph>
            <Glyph x={11.800} y={13.500} s={13} c={BLUE} f="Liberation Serif" i>x</Glyph>
          </Svg>
          <div className="absolute top-[268px] -left-px flex h-[50px] w-[5px] items-center bg-[#8f8f8f]">
            <svg viewBox="0 0 4 6" className="h-[5px] w-1">
              <path d="M1 1l3 2-3 2z" fill="#fff" />
            </svg>
          </div>
        </div>
      </div>

      <div className="flex h-[17px] shrink-0 items-center divide-x divide-[#e0dedc] border-t border-[#d6d3d0] text-[9.300px] leading-none">
        <Status className="w-[175px]">
          <Svg className="mr-[9px] ml-[6px] size-3">
            <path d="M1.500 1.500h13v13h-13zM4.500 1.500v5h7v-5M4.500 14.500v-5h7v5M7.500 11v2" stroke="#999" />
          </Svg>
          <T w={44} t="Sheet 2 of 4" />
        </Status>
        <Status className="w-[215px] pl-[6.500px]">
          <T w={98.500} t="Selected: 1 row, 6 columns" />
        </Status>
        <Status className="w-[219px] pl-[5.500px]">
          <T w={104.500} t="PageStyle_Sammanställning" />
        </Status>
        <Status className="w-[165px] justify-center pl-1">
          <T w={50} t="English (USA)" />
        </Status>
        <Status className="w-[46px]" />
        <Status className="w-[31px] justify-center gap-[3px] pl-1">
          <span className="h-[7px] w-[12px] border border-[#3f95d3] bg-white" />
          <svg viewBox="0 0 6 11" className="h-[11px] w-[6px]" fill="none" stroke="#333">
            <path d="M.5 .5h5M.5 10.500h5M3 .5v10" />
          </svg>
        </Status>
        <Status className="w-[20px]" />
        <Status className="w-[20px]" />
        <Status className="w-[180px] justify-center pl-1">
          <T w={64.500} t="Average: ; Sum: 0" />
        </Status>
        <Status className="w-[96px] justify-center pl-px">
          <svg viewBox="0 0 86 10" className="h-[10px] w-[86px]" fill="none">
            <path d="M1 5h6.500M79 5h7M82.500 1.500v7" stroke="#222" strokeWidth="1.600" />
            <path d="M11.500 5h65" stroke="#8c8c8c" />
            <rect x="42" y="2" width="2.500" height="6.500" fill="#fff" stroke="#555" />
          </svg>
        </Status>
        <Status className="flex-1 pl-[6px]">
          <T w={20.500} t="100%" />
        </Status>
      </div>
    </div>
  );
}
